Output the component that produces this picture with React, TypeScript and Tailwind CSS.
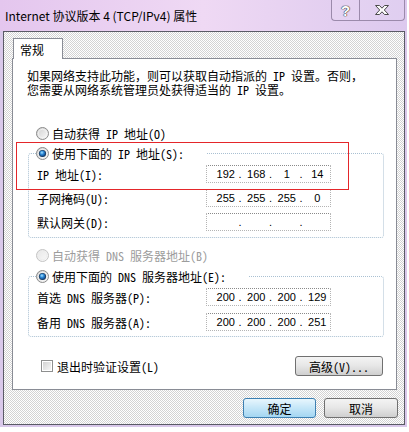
import React from "react";

function Radio({ checked, disabled }: { checked?: boolean; disabled?: boolean }) {
  const ring = disabled ? "#c4c4c4" : "#8a8a8a";
  return (
    <svg width="13" height="13" viewBox="0 0 13 13" className="shrink-0">
      <defs>
        <linearGradient id="rg-en" x1="0" y1="0" x2="1" y2="1">
          <stop offset="0" stopColor="#cfcfcf" />
          <stop offset="1" stopColor="#fbfbfb" />
        </linearGradient>
        <linearGradient id="rg-dis" x1="0" y1="0" x2="1" y2="1">
          <stop offset="0" stopColor="#e6e6e6" />
          <stop offset="1" stopColor="#fafafa" />
        </linearGradient>
        <radialGradient id="rg-dot" cx="0.4" cy="0.35" r="0.7">
          <stop offset="0" stopColor="#a8e4ff" />
          <stop offset="0.45" stopColor="#2e8ad8" />
          <stop offset="1" stopColor="#0d3d7a" />
        </radialGradient>
      </defs>
      <circle cx="6.5" cy="6.5" r="6" fill={disabled ? "url(#rg-dis)" : "url(#rg-en)"} stroke={ring} strokeWidth="1" />
      <circle cx="6.5" cy="6.5" r="4.2" fill="none" stroke={disabled ? "#ececec" : "#f4f4f4"} strokeWidth="0.8" />
      {checked && (
        <>
          <circle cx="6.5" cy="6.5" r="3.6" fill="#1f3d5c" />
          <circle cx="6.5" cy="6.5" r="2.9" fill="url(#rg-dot)" />
        </>
      )}
    </svg>
  );
}

function Checkbox() {
  return (
    <div className="h-[12px] w-[12px] shrink-0 border border-[#8e8f8f] bg-white p-[1px]">
      <div className="h-full w-full bg-gradient-to-br from-[#d2d2d2] to-[#f6f6f6]" />
    </div>
  );
}

function IpField({ parts }: { parts: string[] }) {
  return (
    <div className="flex h-[18px] w-[125px] items-center border border-dotted border-[#b4b4b4] border-t-[#8a8a8a] border-t-solid bg-white pl-[1px] font-['Liberation_Sans',sans-serif] text-[11px] leading-none text-black">
      {parts.map((p, i) => (
        <div key={i} className="flex w-[31px] items-center">
          <span className="w-[5px]">{i > 0 ? "." : ""}</span>
          <span className="flex-1 text-center">{p}</span>
        </div>
      ))}
    </div>
  );
}

function FieldRow({ label, parts, className }: { label: string; parts: string[]; className?: string }) {
  return (
    <div className={"flex h-[18px] items-center " + (className ?? "")}>
      <div className="w-[177px] pl-[8px]">{label}</div>
      <IpField parts={parts} />
    </div>
  );
}

const DESC = "如果网络支持此功能，则可以获取自动指派的 IP 设置。否则，\n您需要从网络系统管理员处获得适当的 IP 设置。";

export default function App() {
  return (
    <div className="h-[432px] w-[409px] overflow-hidden bg-white font-['Noto_Sans_Mono_CJK_SC','Noto_Sans_CJK_SC',sans-serif] text-[12px] leading-[13px] text-black">
      <div className="flex h-[427px] w-[407px] flex-col bg-[#d9c8ea]">
        {/* title bar */}
        <div className="flex h-[31px] shrink-0 items-start bg-gradient-to-r from-[#e4c6ee] via-[#efd9f4] to-[#dcc9ee]">
          <div className="mt-[8px] pl-[5px] font-['Noto_Sans_CJK_SC',sans-serif] text-[12px] leading-[16px] text-black">
            Internet 协议版本 4 (TCP/IPv4) 属性
          </div>
          <div className="ml-auto mr-[2px] flex">
            <div className="flex h-[21px] w-[28px] items-center justify-center rounded-bl-[4px] border border-r-0 border-t-0 border-[#9b8aab] bg-white/10 font-['Liberation_Sans',sans-serif] text-[15px] font-bold text-white [text-shadow:0_0_1px_#333,0_0_1px_#333,0_0_1px_#333]">
              ?
            </div>
            <div className="flex h-[21px] w-[46px] items-center justify-center rounded-br-[4px] border border-t-0 border-[#9b8aab] bg-white/10">
              <svg width="16" height="12" viewBox="0 0 16 12">
                <path
                  d="M1.5 1.5 H5.5 L8 4.2 L10.5 1.5 H14.5 L10.3 6 L14.5 10.5 H10.5 L8 7.8 L5.5 10.5 H1.5 L5.7 6 Z"
                  fill="#fbfbfb"
                  stroke="#4a4a4a"
                  strokeWidth="1"
                  strokeLinejoin="round"
                />
              </svg>
            </div>
          </div>
        </div>
        {/* client area */}
        <div className="mb-[2px] ml-[3px] mr-[2px] flex flex-1 flex-col border border-[#5a5a66] bg-[repeating-conic-gradient(#ffffff_0%_25%,#d3d3d3_0%_50%)] bg-[length:2px_2px]">
          <div className="ml-[8px] mt-[6px] w-[385px]">
            <div className="relative z-10 -mb-px ml-[1px] flex h-[21px] w-[50px] items-center border border-b-0 border-[#898c95] bg-white pl-[6px] pt-[1px]">
              常规
            </div>
            <div className="relative h-[332px] border border-[#898c95] bg-white">
              <p className="whitespace-pre-line pl-[14px] pt-[10px] leading-[14px]">{DESC}</p>

              <div className="ml-[23px] mt-[30px] flex h-[13px] items-center gap-[3px]">
                <Radio />
                <span>自动获得 IP 地址(O)</span>
              </div>

              <div className="ml-[15px] mt-[13px] w-[356px] rounded-[3px] border border-dotted border-[#a9c0d2] pb-[6px]">
                <div className="-mt-[7px] ml-[7px] flex h-[13px] w-[171px] items-center gap-[3px] bg-white">
                  <Radio checked />
                  <span>使用下面的 IP 地址(S):</span>
                </div>
                <FieldRow className="mt-[5px]" label="IP 地址(I):" parts={["192", "168", "1", "14"]} />
                <FieldRow className="mt-[6px]" label="子网掩码(U):" parts={["255", "255", "255", "0"]} />
                <FieldRow className="mt-[6px]" label="默认网关(D):" parts={["", "", "", ""]} />
              </div>

              <div className="ml-[23px] mt-[11px] flex h-[13px] items-center gap-[3px] text-[#9c9c9c]">
                <Radio disabled />
                <span>自动获得 DNS 服务器地址(B)</span>
              </div>

              <div className="ml-[15px] mt-[14px] w-[356px] rounded-[3px] border border-dotted border-[#a9c0d2] pb-[5px]">
                <div className="-mt-[7px] ml-[7px] flex h-[13px] w-[212px] items-center gap-[3px] bg-white">
                  <Radio checked />
                  <span>使用下面的 DNS 服务器地址(E):</span>
                </div>
                <FieldRow className="mt-[5px]" label="首选 DNS 服务器(P):" parts={["200", "200", "200", "129"]} />
                <FieldRow className="mt-[7px]" label="备用 DNS 服务器(A):" parts={["200", "200", "200", "251"]} />
              </div>

              <div className="mt-[19px] flex items-center pl-[28px] pr-[13px]">
                <div className="flex items-center gap-[4px]">
                  <Checkbox />
                  <span>退出时验证设置(L)</span>
                </div>
                <div className="ml-auto flex h-[20px] w-[88px] items-center justify-center rounded-[3px] border border-[#707070] bg-gradient-to-b from-[#f4f4f4] via-[#e6e6e6] to-[#cfcfcf]">
                  高级(V)...
                </div>
              </div>

              {/* red highlight annotation */}
              <div className="pointer-events-none absolute left-[3px] top-[83px] h-[48px] w-[333px] border border-[#e4262a]" />
            </div>
          </div>

          <div className="mt-[8px] flex justify-end gap-[8px] pr-[6px]">
            <div className="flex h-[20px] w-[73px] items-center justify-center rounded-[3px] border border-[#3c7fb1] bg-gradient-to-b from-[#e8f6fd] via-[#c4e6f8] to-[#a4d6f2]">
              确定
            </div>
            <div className="flex h-[20px] w-[74px] items-center justify-center rounded-[3px] border border-[#707070] bg-gradient-to-b from-[#f4f4f4] via-[#e6e6e6] to-[#cfcfcf]">
              取消
            </div>
          </div>
        </div>
      </div>
    </div>
  );
}
